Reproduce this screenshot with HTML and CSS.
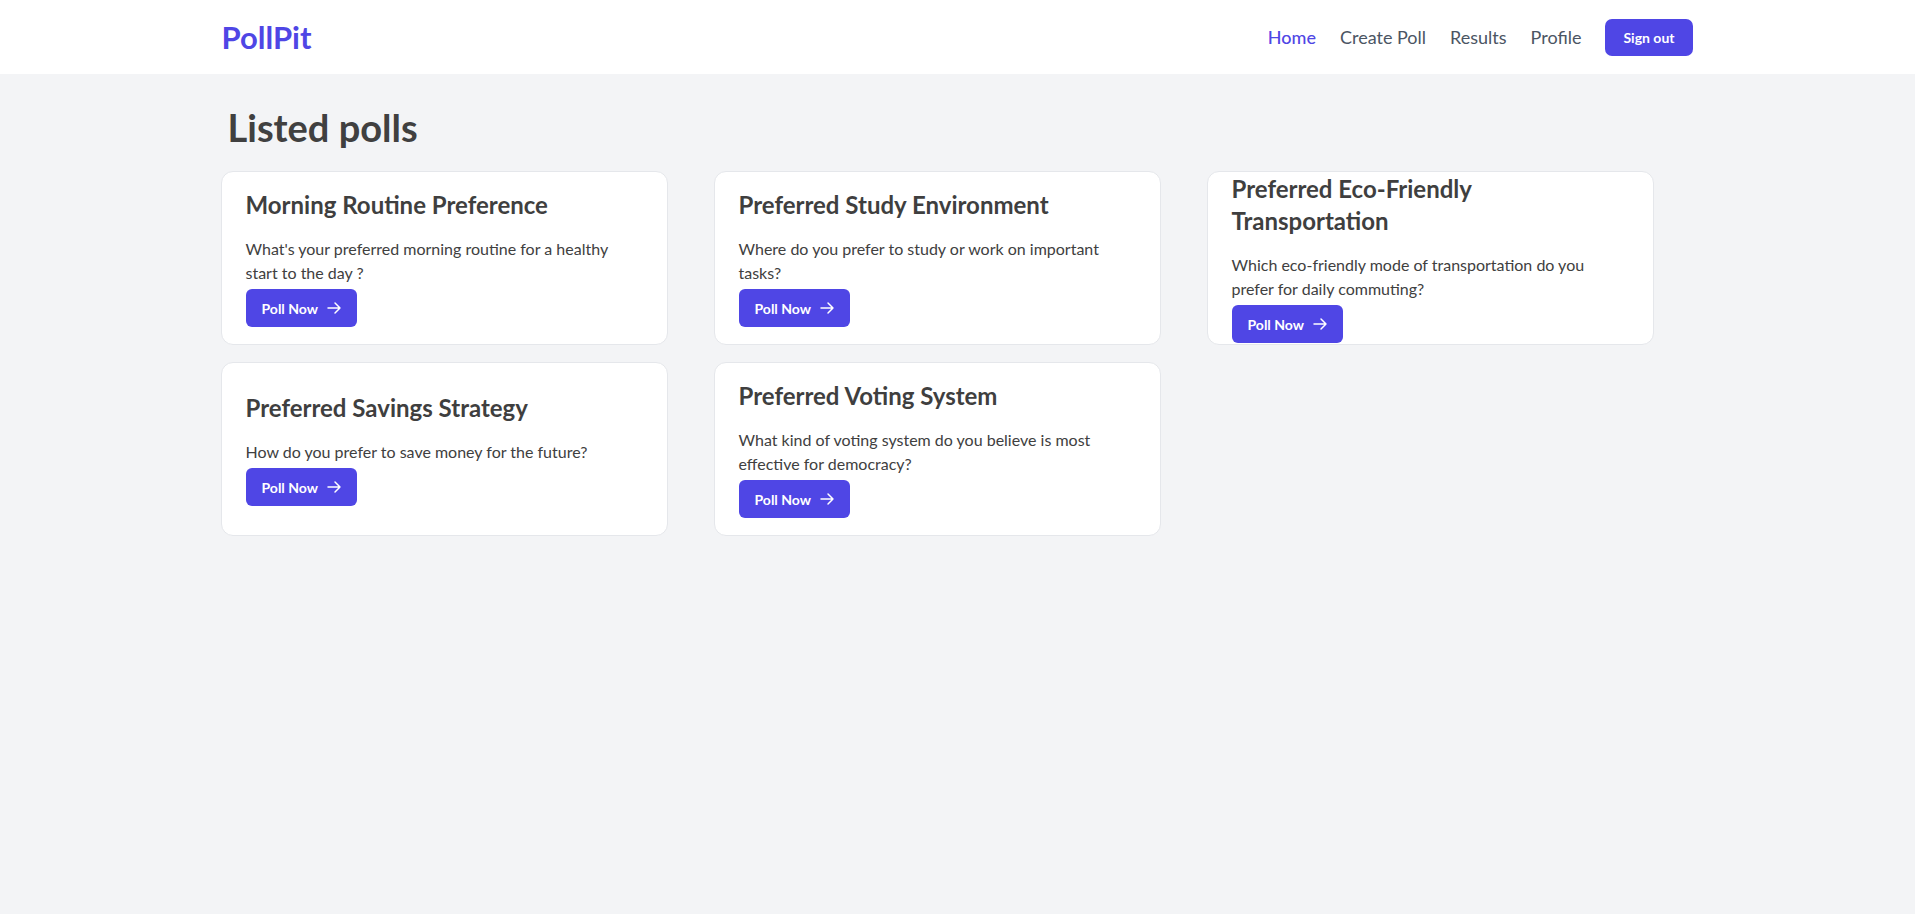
FILE: index.html
```html
<!DOCTYPE html>
<html lang="en">
<head>
<meta charset="utf-8">
<title>PollPit</title>
<link rel="stylesheet" href="styles.css">
</head>
<body>
<header class="topbar">
  <div class="container topbar-inner">
    <a class="logo" href="#">PollPit</a>
    <nav class="nav">
      <a class="nav-link active" href="#">Home</a>
      <a class="nav-link" href="#">Create Poll</a>
      <a class="nav-link" href="#">Results</a>
      <a class="nav-link" href="#">Profile</a>
      <button class="btn-signout" type="button">Sign out</button>
    </nav>
  </div>
</header>
<main class="container main">
  <h1 class="page-title">Listed polls</h1>
  <div class="poll-grid">
    <div class="poll-card">
      <h2 class="poll-title">Morning Routine Preference</h2>
      <p class="poll-desc">What's your preferred morning routine for a healthy start to the day ?</p>
      <a class="btn-poll" href="#">Poll Now <svg class="arrow" viewBox="0 0 24 24" width="16" height="16" fill="none" stroke="currentColor" stroke-width="2.2" stroke-linecap="round" stroke-linejoin="round"><path d="M13.5 4.5L21 12l-7.5 7.5M21 12H3"/></svg></a>
    </div>
    <div class="poll-card">
      <h2 class="poll-title">Preferred Study Environment</h2>
      <p class="poll-desc">Where do you prefer to study or work on important tasks?</p>
      <a class="btn-poll" href="#">Poll Now <svg class="arrow" viewBox="0 0 24 24" width="16" height="16" fill="none" stroke="currentColor" stroke-width="2.2" stroke-linecap="round" stroke-linejoin="round"><path d="M13.5 4.5L21 12l-7.5 7.5M21 12H3"/></svg></a>
    </div>
    <div class="poll-card">
      <h2 class="poll-title">Preferred Eco-Friendly Transportation</h2>
      <p class="poll-desc">Which eco-friendly mode of transportation do you prefer for daily commuting?</p>
      <a class="btn-poll" href="#">Poll Now <svg class="arrow" viewBox="0 0 24 24" width="16" height="16" fill="none" stroke="currentColor" stroke-width="2.2" stroke-linecap="round" stroke-linejoin="round"><path d="M13.5 4.5L21 12l-7.5 7.5M21 12H3"/></svg></a>
    </div>
    <div class="poll-card">
      <h2 class="poll-title">Preferred Savings Strategy</h2>
      <p class="poll-desc">How do you prefer to save money for the future?</p>
      <a class="btn-poll" href="#">Poll Now <svg class="arrow" viewBox="0 0 24 24" width="16" height="16" fill="none" stroke="currentColor" stroke-width="2.2" stroke-linecap="round" stroke-linejoin="round"><path d="M13.5 4.5L21 12l-7.5 7.5M21 12H3"/></svg></a>
    </div>
    <div class="poll-card">
      <h2 class="poll-title">Preferred Voting System</h2>
      <p class="poll-desc">What kind of voting system do you believe is most effective for democracy?</p>
      <a class="btn-poll" href="#">Poll Now <svg class="arrow" viewBox="0 0 24 24" width="16" height="16" fill="none" stroke="currentColor" stroke-width="2.2" stroke-linecap="round" stroke-linejoin="round"><path d="M13.5 4.5L21 12l-7.5 7.5M21 12H3"/></svg></a>
    </div>
  </div>
</main>
</body>
</html>
```
FILE: styles.css
```css
* { box-sizing: border-box; }

html, body {
  margin: 0;
  padding: 0;
}

body {
  background: #f3f4f6;
  font-family: "Lato", "Noto Sans", sans-serif;
  color: #404040;
  min-height: 100vh;
}

a { text-decoration: none; }

.container {
  max-width: 1536px;
  margin: 0 auto;
  padding: 0 33px 0 31px;
}

.topbar {
  background: #ffffff;
  height: 74px;
}

.topbar-inner {
  height: 100%;
  display: flex;
  align-items: center;
  justify-content: space-between;
}

.logo {
  font-size: 31px;
  line-height: 36px;
  font-weight: 700;
  color: #4f46e5;
  margin-left: 1px;
}

.nav {
  display: flex;
  align-items: center;
  gap: 24px;
}

.nav-link {
  font-size: 18px;
  line-height: 28px;
  color: #4b5563;
}

.nav-link.active {
  color: #4f46e5;
  font-weight: 500;
}

.btn-signout {
  height: 37px;
  padding: 0 18px;
  border: none;
  border-radius: 7px;
  background: #4f46e5;
  color: #ffffff;
  font-family: inherit;
  font-size: 14px;
  font-weight: 700;
  cursor: pointer;
}

.main {
  padding-top: 31px;
}

.page-title {
  margin: 0 0 22px;
  padding-left: 7px;
  font-size: 38px;
  line-height: 44px;
  font-weight: 700;
  color: #404040;
}

.poll-grid {
  display: grid;
  grid-template-columns: repeat(3, 447px);
  column-gap: 46px;
  row-gap: 17px;
}

.poll-card {
  height: 174px;
  background: #ffffff;
  border: 1px solid #e5e7eb;
  border-radius: 12px;
  padding: 0 24px;
  display: flex;
  flex-direction: column;
  justify-content: center;
  align-items: flex-start;
}

.poll-title {
  margin: 0 0 16px;
  font-size: 24px;
  line-height: 32px;
  font-weight: 700;
  color: #3f3f3f;
}

.poll-desc {
  margin: 0 0 4px;
  font-size: 16px;
  line-height: 24px;
  color: #404040;
}

.btn-poll {
  display: inline-flex;
  align-items: center;
  height: 38px;
  padding: 0 15px 0 16px;
  border-radius: 6px;
  background: #4f46e5;
  color: #ffffff;
  font-size: 14px;
  font-weight: 700;
  flex-shrink: 0;
}

.btn-poll .arrow {
  margin-left: 8px;
  display: block;
}
```
